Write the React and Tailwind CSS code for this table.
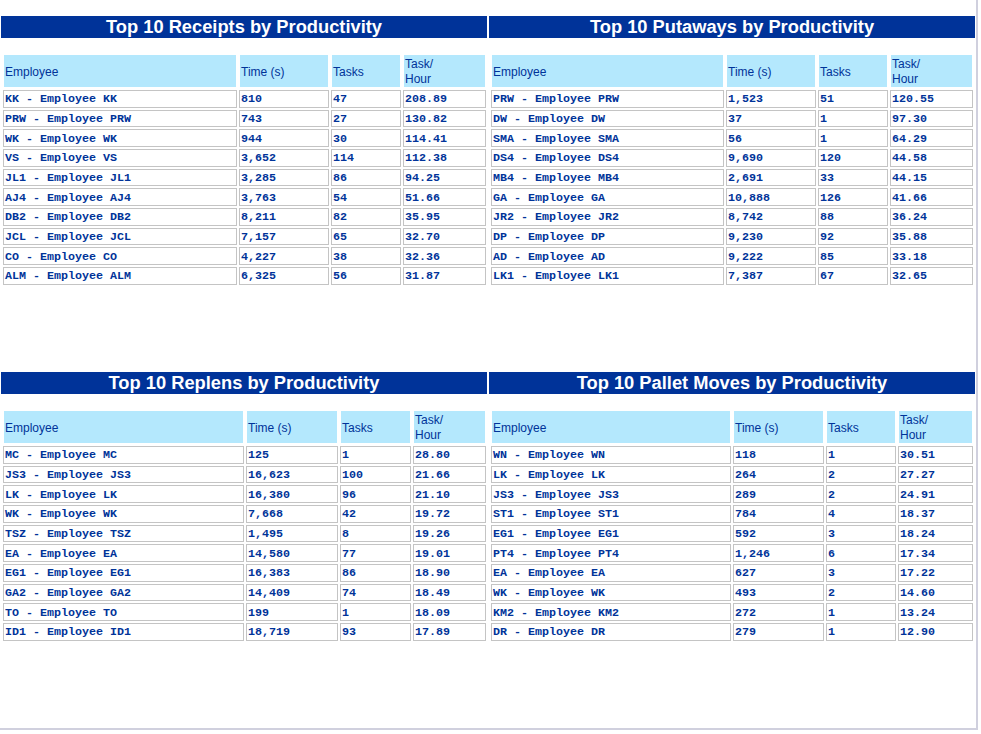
import React from "react";

const receipts = [
  ["KK - Employee KK", "810", "47", "208.89"],
  ["PRW - Employee PRW", "743", "27", "130.82"],
  ["WK - Employee WK", "944", "30", "114.41"],
  ["VS - Employee VS", "3,652", "114", "112.38"],
  ["JL1 - Employee JL1", "3,285", "86", "94.25"],
  ["AJ4 - Employee AJ4", "3,763", "54", "51.66"],
  ["DB2 - Employee DB2", "8,211", "82", "35.95"],
  ["JCL - Employee JCL", "7,157", "65", "32.70"],
  ["CO - Employee CO", "4,227", "38", "32.36"],
  ["ALM - Employee ALM", "6,325", "56", "31.87"],
];

const putaways = [
  ["PRW - Employee PRW", "1,523", "51", "120.55"],
  ["DW - Employee DW", "37", "1", "97.30"],
  ["SMA - Employee SMA", "56", "1", "64.29"],
  ["DS4 - Employee DS4", "9,690", "120", "44.58"],
  ["MB4 - Employee MB4", "2,691", "33", "44.15"],
  ["GA - Employee GA", "10,888", "126", "41.66"],
  ["JR2 - Employee JR2", "8,742", "88", "36.24"],
  ["DP - Employee DP", "9,230", "92", "35.88"],
  ["AD - Employee AD", "9,222", "85", "33.18"],
  ["LK1 - Employee LK1", "7,387", "67", "32.65"],
];

const replens = [
  ["MC - Employee MC", "125", "1", "28.80"],
  ["JS3 - Employee JS3", "16,623", "100", "21.66"],
  ["LK - Employee LK", "16,380", "96", "21.10"],
  ["WK - Employee WK", "7,668", "42", "19.72"],
  ["TSZ - Employee TSZ", "1,495", "8", "19.26"],
  ["EA - Employee EA", "14,580", "77", "19.01"],
  ["EG1 - Employee EG1", "16,383", "86", "18.90"],
  ["GA2 - Employee GA2", "14,409", "74", "18.49"],
  ["TO - Employee TO", "199", "1", "18.09"],
  ["ID1 - Employee ID1", "18,719", "93", "17.89"],
];

const pallets = [
  ["WN - Employee WN", "118", "1", "30.51"],
  ["LK - Employee LK", "264", "2", "27.27"],
  ["JS3 - Employee JS3", "289", "2", "24.91"],
  ["ST1 - Employee ST1", "784", "4", "18.37"],
  ["EG1 - Employee EG1", "592", "3", "18.24"],
  ["PT4 - Employee PT4", "1,246", "6", "17.34"],
  ["EA - Employee EA", "627", "3", "17.22"],
  ["WK - Employee WK", "493", "2", "14.60"],
  ["KM2 - Employee KM2", "272", "1", "13.24"],
  ["DR - Employee DR", "279", "1", "12.90"],
];

function HeadCell({ children }) {
  return (
    <div className="h-[34px] border border-transparent bg-clip-padding bg-[#b4e8fd] flex items-center px-px pt-[2px] text-[12px] leading-[15px] text-[#003399] [font-family:'Liberation_Sans',Arial,sans-serif]">
      <div>{children}</div>
    </div>
  );
}

function DataCell({ children }) {
  return (
    <div className="h-[17.67px] border border-[#c4c4c4] flex items-center pl-px pt-[3px] text-[11.67px] leading-none font-bold text-[#003399] whitespace-nowrap overflow-hidden [font-family:'Liberation_Mono','Courier_New',monospace]">
      {children}
    </div>
  );
}

function Panel({ title, rows, cols }) {
  return (
    <div className="flex flex-col">
      <div className="h-[22px] bg-[#003399] text-white font-bold text-[18.3px] leading-none flex items-center justify-center [font-family:'Liberation_Sans',Arial,sans-serif]">
        {title}
      </div>
      <div className={`mt-[16px] grid gap-[2px] pl-[2px] ${cols}`}>
        <HeadCell>Employee</HeadCell>
        <HeadCell>Time (s)</HeadCell>
        <HeadCell>Tasks</HeadCell>
        <HeadCell>
          Task/
          <br />
          Hour
        </HeadCell>
        {rows.map((r, i) => (
          <React.Fragment key={i}>
            <DataCell>{r[0]}</DataCell>
            <DataCell>{r[1]}</DataCell>
            <DataCell>{r[2]}</DataCell>
            <DataCell>{r[3]}</DataCell>
          </React.Fragment>
        ))}
      </div>
    </div>
  );
}

export default function App() {
  return (
    <div className="w-[978px] h-[730px] bg-white border-r-2 border-b-2 border-[#d0d0de] pt-[16px] pl-px">
      <div className="h-[356px] grid grid-cols-[486px_486px] gap-x-[2px] items-start">
        <Panel
          title="Top 10 Receipts by Productivity"
          rows={receipts}
          cols="grid-cols-[234px_90px_70px_83px]"
        />
        <Panel
          title="Top 10 Putaways by Productivity"
          rows={putaways}
          cols="grid-cols-[233px_90px_70px_83px]"
        />
      </div>
      <div className="h-[356px] grid grid-cols-[486px_486px] gap-x-[2px] items-start">
        <Panel
          title="Top 10 Replens by Productivity"
          rows={replens}
          cols="grid-cols-[241px_92px_71px_73px]"
        />
        <Panel
          title="Top 10 Pallet Moves by Productivity"
          rows={pallets}
          cols="grid-cols-[240px_91px_70px_75px]"
        />
      </div>
    </div>
  );
}
